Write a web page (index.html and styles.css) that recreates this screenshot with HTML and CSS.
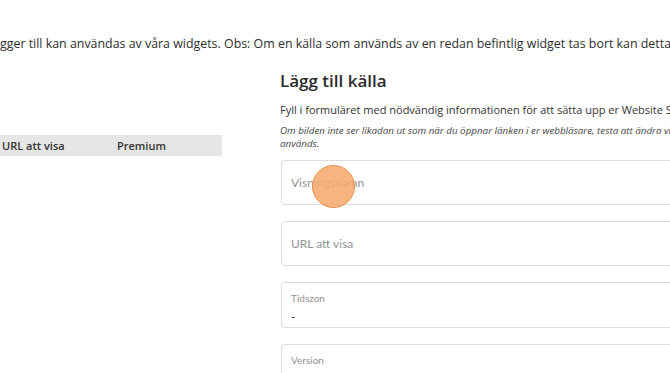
FILE: index.html
```html
<!DOCTYPE html>
<html lang="sv">
<head>
<meta charset="utf-8">
<link rel="stylesheet" href="styles.css">
</head>
<body>
<p class="intro">gger till kan användas av våra widgets. Obs: Om en källa som används av en redan befintlig widget tas bort kan detta även påverka widgeten.</p>
<div class="main">
  <div class="list">
    <div class="list-head">
      <span class="col col-url">URL att visa</span>
      <span class="col col-premium">Premium</span>
    </div>
  </div>
  <div class="form">
    <h2 class="title">Lägg till källa</h2>
    <p class="lead">Fyll i formuläret med nödvändig informationen för att sätta upp er Website Screenshot-källa.</p>
    <p class="note">Om bilden inte ser likadan ut som när du öppnar länken i er webbläsare, testa att ändra vilken version som<br>används.</p>
    <div class="field">
      <span class="placeholder">Visningsnamn</span>
      <span class="cursor"></span>
    </div>
    <div class="field">
      <span class="placeholder">URL att visa</span>
    </div>
    <div class="field field-select">
      <span class="label">Tidszon</span>
      <span class="value">-</span>
    </div>
    <div class="field field-select">
      <span class="label">Version</span>
    </div>
  </div>
</div>
</body>
</html>
```
FILE: styles.css
```css
html, body {
  margin: 0;
  padding: 0;
  background: #ffffff;
  overflow: hidden;
  width: 670px;
  height: 373px;
}
body {
  font-family: "Open Sans", "Liberation Sans", sans-serif;
  color: #333333;
}
.intro {
  margin: 35px 0 0;
  font-size: 12.4px;
  line-height: 18px;
  white-space: nowrap;
  color: #2e2e2e;
}
.main {
  display: flex;
  gap: 58px;
  margin-top: 7px;
}
.list {
  width: 222px;
  flex: none;
  padding-top: 75px;
}
.list-head {
  display: flex;
  align-items: center;
  height: 21px;
  background: #e6e6e6;
  font-size: 11px;
  font-weight: 600;
  color: #333333;
}
.col-url {
  width: 115px;
  padding-left: 2px;
}
.form {
  width: 420px;
  flex: none;
}
.title {
  margin: 9px 0 0;
  font-size: 17px;
  line-height: 24px;
  font-weight: 600;
  color: #2a2a2a;
}
.lead {
  margin: 9px 0 0;
  font-size: 11px;
  line-height: 16px;
  white-space: nowrap;
  color: #333333;
}
.note {
  margin: 6px 0 0;
  font-size: 9.8px;
  line-height: 13px;
  font-style: italic;
  white-space: nowrap;
  color: #444444;
}
.field {
  position: relative;
  display: flex;
  flex-direction: column;
  justify-content: center;
  box-sizing: border-box;
  height: 45px;
  margin: 10px 0 0 1px;
  padding: 0 9px;
  border: 1px solid #dcdcdc;
  border-radius: 4px;
  font-family: Lato, "Open Sans", sans-serif;
}
.field + .field {
  margin-top: 16px;
}
.field-select {
  height: 46px;
  justify-content: flex-start;
  padding-top: 8px;
}
.placeholder {
  font-size: 12px;
  color: #939393;
}
.label {
  font-size: 10px;
  line-height: 14px;
  color: #939393;
}
.value {
  margin-top: 5px;
  font-size: 12px;
  line-height: 14px;
  color: #333333;
}
.cursor {
  position: absolute;
  left: 30px;
  top: 4px;
  width: 41px;
  height: 41px;
  border-radius: 50%;
  background: rgba(248, 168, 104, 0.85);
  border: 1.5px solid #e8904a;
}
```
